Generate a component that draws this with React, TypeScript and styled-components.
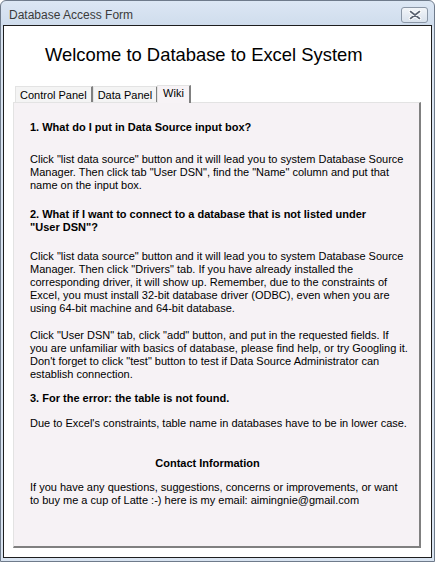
import React from 'react'
import styled, { createGlobalStyle } from 'styled-components';

const GlobalStyle = createGlobalStyle`
    html, body {
        margin: 0;
        padding: 0;
    }
    body {
        font-family: "Liberation Sans", Arial, sans-serif;
    }
`;

const tabs = ['Control Panel', 'Data Panel', 'Wiki'];

const App = () => {
  return (
    <>
      <GlobalStyle />
      <WindowFrame>
        <TitleBar>
            <TitleText>Database Access Form</TitleText>
            <CloseButton>
                <svg width="14" height="10" viewBox="0 0 14 10">
                    <path d="M2.5 1.5 L11.5 8.5 M11.5 1.5 L2.5 8.5" stroke="#fff" strokeWidth="3.6" strokeLinecap="round" />
                    <path d="M2.5 1.5 L11.5 8.5 M11.5 1.5 L2.5 8.5" stroke="#5a6270" strokeWidth="1.6" strokeLinecap="round" />
                </svg>
            </CloseButton>
        </TitleBar>
        <ClientArea>
            <Heading>Welcome to Database to Excel System</Heading>
            <TabStrip>
                {tabs.map((t) => (
                    <Tab key={t} $active={t === 'Wiki'}>{t}</Tab>
                ))}
            </TabStrip>
            <TabPanel>
                <Question $gap={19}>1. What do I put in Data Source input box?</Question>
                <Paragraph $gap={16}>
                    Click "list data source" button and it will lead you to system Database Source<br />
                    Manager. Then click tab "User DSN", find the "Name" column and put that<br />
                    name on the input box.
                </Paragraph>
                <Question $gap={16}>2. What if I want to connect to a database that is not listed under<br />"User DSN"?</Question>
                <Paragraph $gap={14}>
                    Click "list data source" button and it will lead you to system Database Source<br />
                    Manager. Then click "Drivers" tab. If you have already installed the<br />
                    corresponding driver, it will show up. Remember, due to the constraints of<br />
                    Excel, you must install 32-bit database driver (ODBC), even when you are<br />
                    using 64-bit machine and 64-bit database.
                </Paragraph>
                <Paragraph $gap={11}>
                    Click "User DSN" tab, click "add" button, and put in the requested fields. If<br />
                    you are unfamiliar with basics of database, please find help, or try Googling it.<br />
                    Don't forget to click "test" button to test if Data Source Administrator can<br />
                    establish connection.
                </Paragraph>
                <Question $gap={12}>3. For the error: the table is not found.</Question>
                <Paragraph $gap={27}>
                    Due to Excel's constraints, table name in databases have to be in lower case.
                </Paragraph>
                <ContactTitle>Contact Information</ContactTitle>
                <Paragraph>
                    If you have any questions, suggestions, concerns or improvements, or want<br />
                    to buy me a cup of Latte :-) here is my email: aimingnie@gmail.com
                </Paragraph>
            </TabPanel>
        </ClientArea>
      </WindowFrame>
    </>
  )
};

const WindowFrame = styled.div`
    width: 435px;
    height: 562px;
    box-sizing: border-box;
    border: 1px solid #6f7b8b;
    border-radius: 6px 6px 0 0;
    background: linear-gradient(to bottom, #dce7f4 0px, #cfdcec 25px, #d9e4f1 26px, #d9e4f1 100%);
    display: flex;
    flex-direction: column;
    padding: 0 2px 3px 2px;
`;

const TitleBar = styled.div`
    height: 24px;
    display: flex;
    align-items: center;
    justify-content: space-between;
    padding: 0 4px 0 6px;
`;

const TitleText = styled.div`
    font-family: "Liberation Sans", Arial, sans-serif;
    font-size: 12px;
    color: #3b3b3b;
    margin-top: 4px;
`;

const CloseButton = styled.div`
    width: 27px;
    height: 16px;
    margin-top: 4px;
    box-sizing: border-box;
    border: 1px solid #8a96a6;
    border-radius: 3px;
    background: linear-gradient(to bottom, #f2f5f9, #d8e1ec);
    display: flex;
    align-items: center;
    justify-content: center;
`;

const ClientArea = styled.div`
    flex: 1;
    background: #ffffff;
    border: 1px solid #1e1e1e;
    display: flex;
    flex-direction: column;
    padding: 0 10px 9px 9px;
`;

const Heading = styled.div`
    font-family: "Liberation Sans", Arial, sans-serif;
    font-size: 18.4px;
    color: #000;
    padding: 18px 0 0 32px;
    height: 40px;
    white-space: nowrap;
`;

const TabStrip = styled.div`
    display: flex;
    align-items: flex-end;
    height: 18px;
    padding-left: 2px;
    position: relative;
    z-index: 1;
`;

const Tab = styled.div<{ $active?: boolean }>`
    font-size: 11px;
    color: #000;
    height: ${(p) => (p.$active ? '18px' : '16px')};
    line-height: ${(p) => (p.$active ? '15px' : '16px')};
    padding: 0 ${(p) => (p.$active ? '5px' : '4px')};
    box-sizing: border-box;
    background: ${(p) => (p.$active ? '#f7f3f6' : '#f4f4f4')};
    border-top: 1px solid #e3e3e3;
    border-left: 1px solid #e3e3e3;
    border-right: 2px solid #808080;
    margin-left: ${(p) => (p.$active ? '-1px' : '0')};
    margin-bottom: ${(p) => (p.$active ? '-1px' : '0')};
`;

const TabPanel = styled.div`
    flex: 1;
    background: #f6f2f5;
    border-top: 1px solid #e3e3e3;
    border-left: 1px solid #e3e3e3;
    border-right: 2px solid #808080;
    border-bottom: 2px solid #808080;
    padding: 18px 8px 0 16px;
    font-size: 11px;
    line-height: 13px;
    color: #000;
    white-space: nowrap;
`;

const Question = styled.div<{ $gap?: number }>`
    font-weight: bold;
    margin-bottom: ${(p) => p.$gap ?? 19}px;
`;

const Paragraph = styled.div<{ $gap?: number }>`
    margin-bottom: ${(p) => p.$gap ?? 14}px;
`;

const ContactTitle = styled.div`
    font-weight: bold;
    text-align: center;
    margin-bottom: 11px;
    padding-right: 26px;
`;

export default App;
